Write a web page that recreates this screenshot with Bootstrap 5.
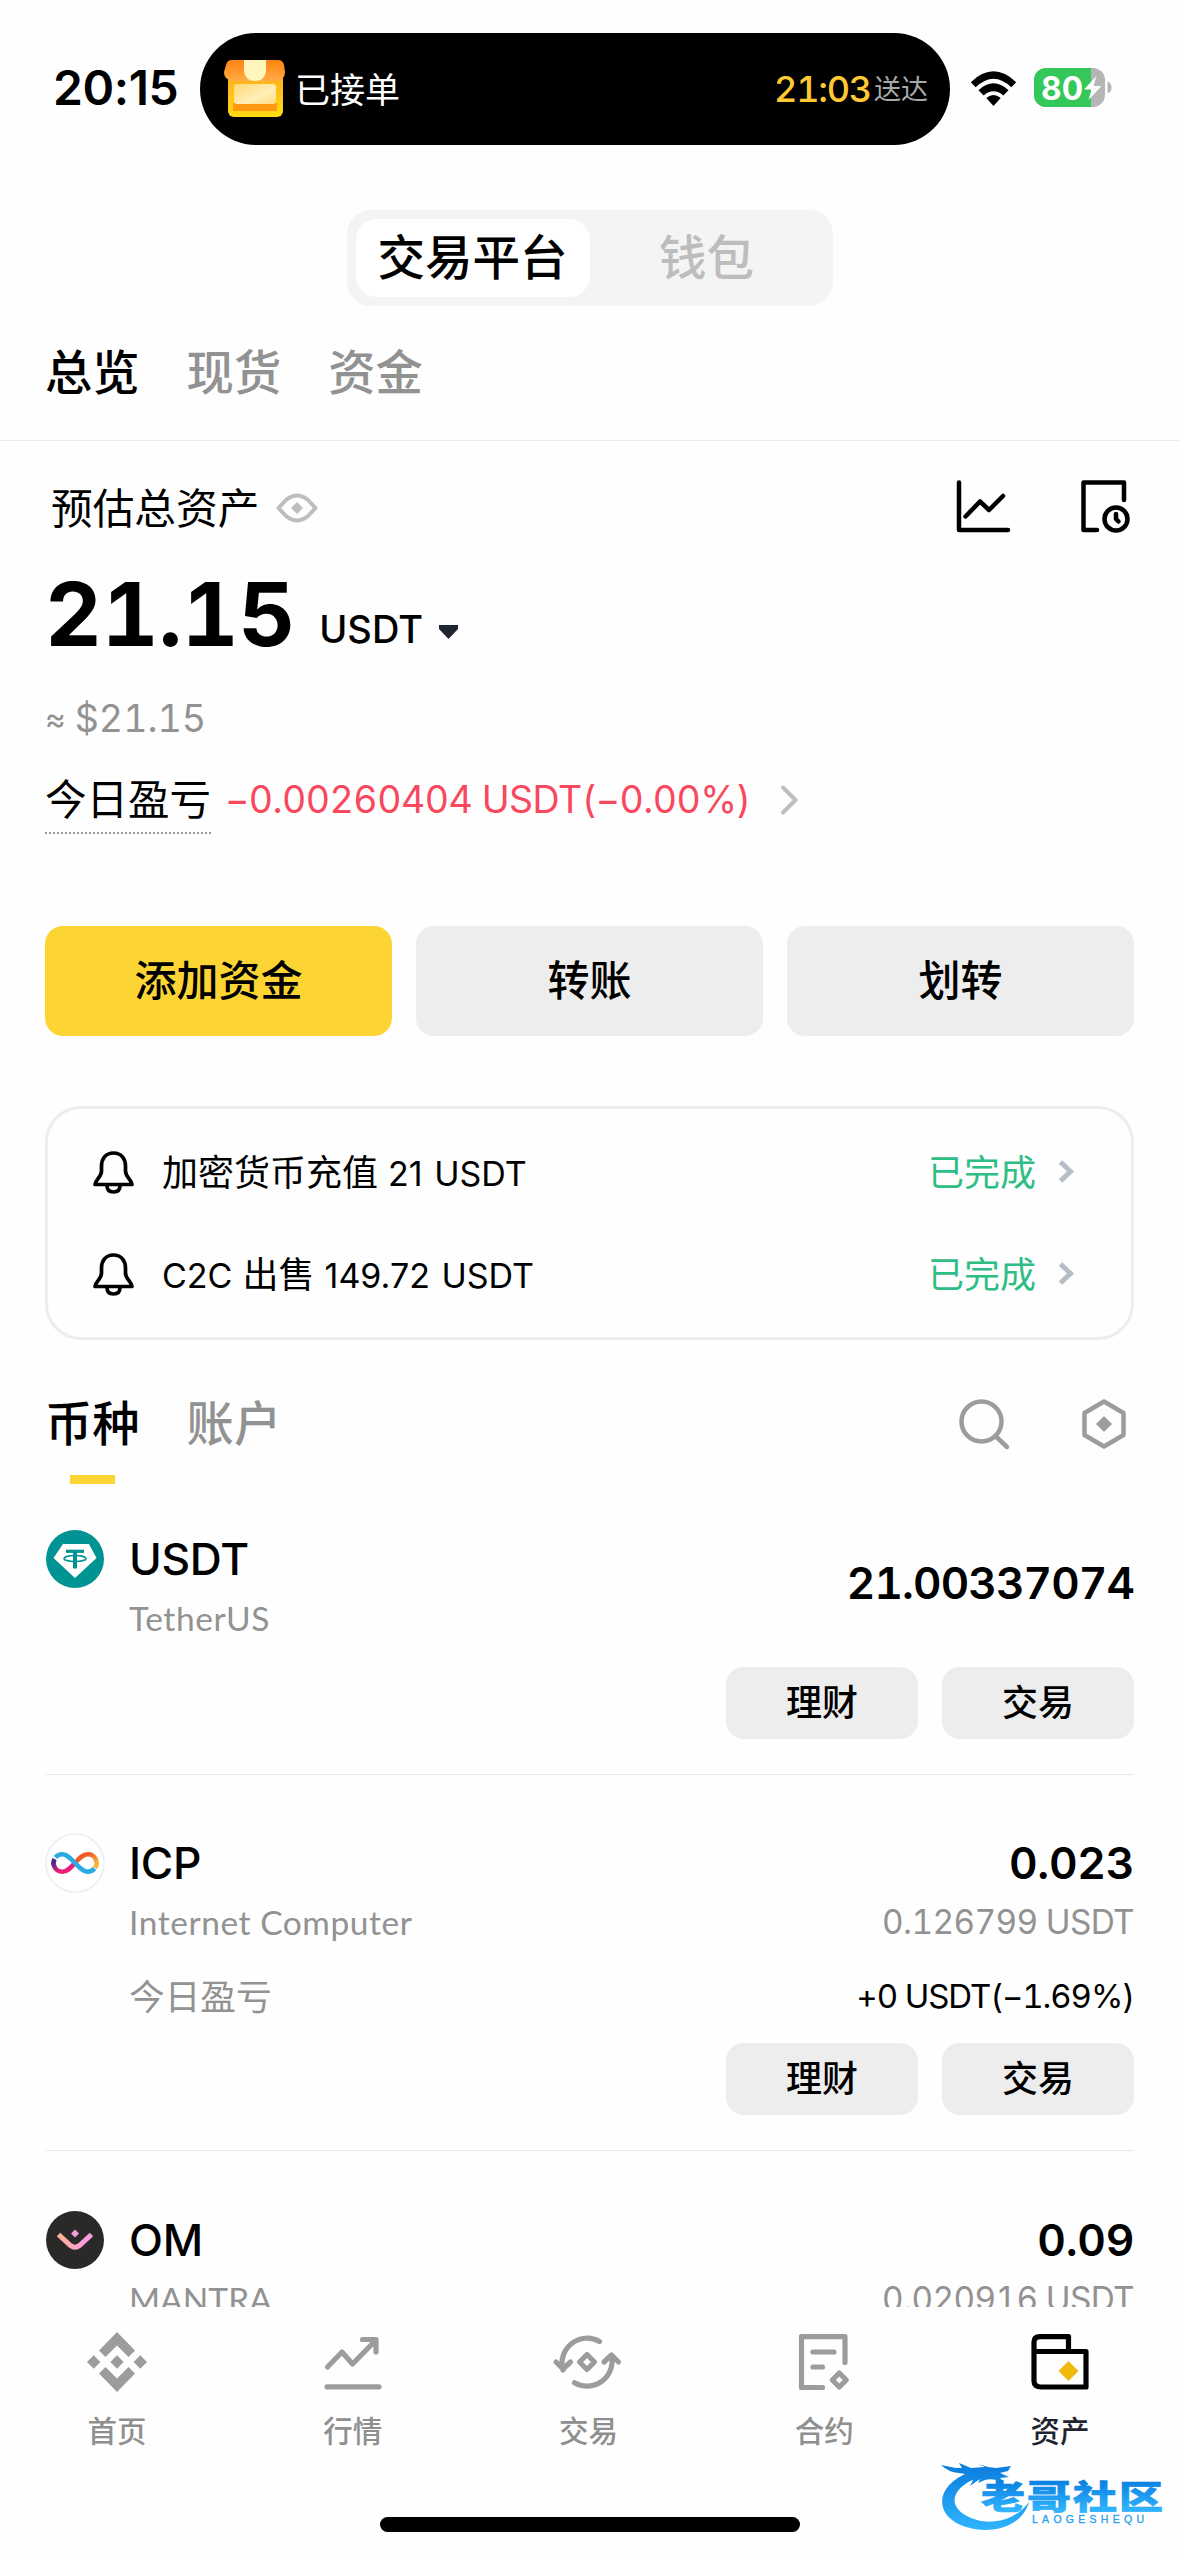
<!DOCTYPE html>
<html lang="zh-CN">
<head>
<meta charset="utf-8">
<meta name="viewport" content="width=device-width, initial-scale=1">
<title>资产</title>
<link href="https://cdn.jsdelivr.net/npm/bootstrap@5.3.0/dist/css/bootstrap.min.css" rel="stylesheet">
<style>
  html, body { width: 1179px; height: 2556px; margin: 0; overflow: hidden; }
  body { background: #fefefe; color: #000; font-family: "Noto Sans CJK SC", sans-serif; font-size: 36px; line-height: 1; }
  svg { display: block; flex: none; overflow: visible; }
  .ltn { font-family: Inter, "Noto Sans CJK SC", sans-serif; }
  .tnum { font-variant-numeric: tabular-nums; }
  .nametext { font-family: Lato, "Open Sans", sans-serif; letter-spacing: .55px; }
  .muted { color: #929292; }
  .px-page { padding-left: 45px; padding-right: 45px; }

  .statusbar { height: 112px; margin-top: 33px; }
  .clock { width: 200px; padding-left: 53px; font-size: 48px; font-weight: 600; letter-spacing: -.4px; padding-bottom: 2px; }
  .island { width: 750px; height: 112px; border-radius: 56px; background: #000; padding: 0 22px 0 24px; }
  .island-title { font-size: 35px; color: #fff; margin-left: 9px; padding-bottom: 4px; }
  .island-time { font-size: 36px; color: #ffc933; font-weight: 500; letter-spacing: -1.2px; }
  .island-note { font-size: 27px; color: #a8a8a8; margin-left: 3px; padding-bottom: 3px; }
  .segment { width: 486px; height: 96px; margin: 65px auto 0; padding: 9px; border-radius: 24px; background: #f4f4f4; font-size: 47.5px; }
  .segment > div { width: 234px; height: 78px; border-radius: 21px; padding-bottom: 7px; }
  .segment .active { background: #fff; font-weight: 500; }
  .segment .idle { color: #bdbdbd; font-weight: 500; }
  .toptabs { height: 134px; gap: 47px; font-size: 47.3px; border-bottom: 1px solid #eaeaea; box-sizing: border-box; height: 135px; padding-bottom: 6px; font-weight: 500; }

  .row-title { height: 133px; padding: 0 4px 0 6px; font-size: 41.7px; }
  .row-title span { padding-bottom: 1px; }
  .row-total { height: 81px; }
  .total { font-size: 88px; font-weight: 700; line-height: 81px; letter-spacing: -.2px; }
  .unit { font-size: 38px; font-weight: 500; margin-left: 24px; transform: translateY(-3px); }
  .row-approx { height: 54px; margin-top: 37px; font-size: 37.5px; }
  .row-pnl { height: 108px; }
  .pnl-label { font-size: 41.5px; height: 67px; line-height: 60px; border-bottom: 2px dotted #999; margin-top: 1px; }
  .pnl-value { font-size: 37.5px; color: #f8485e; margin-left: 14px; letter-spacing: -.55px; }

  .actions { gap: 24px; margin-top: 72px; }
  .actions .btn { height: 110px; border-radius: 18px; font-size: 42px; font-weight: 500; border: 0; background: #ededed; color: #000; line-height: 1; padding: 0 0 7px; }
  .actions .btn.main { background: #fcd535; }
  .notice { margin-top: 70px; height: 234px; border: 3px solid #ededed; border-radius: 36px; padding: 12px 56px 12px 45px; }
  .notice-row { height: 102px; }
  .notice-text { font-size: 36px; margin-left: 28px; padding-bottom: 2px; word-spacing: 2px; }
  .notice-text .ltn { font-size: 34px; }
  .done { color: #2ebd85; margin-right: 22px; padding-bottom: 4px; }

  .asset-tabs { margin-top: 60px; height: 84px; gap: 47px; font-size: 47.3px; }
  .asset-tabs .tab { line-height: 42px; font-weight: 500; }
  .tab-bar { width: 45px; height: 9px; margin-top: 33px; background: #fcd535; }
  .asset { border-bottom: 1px solid #e9e9e9; padding: 59px 0 35px; }
  .asset.first { padding-top: 46px; }
  .asset.last { padding-top: 60px; }
  .coin { width: 60px; margin-right: 24px; }
  .l1 { height: 58px; font-size: 44.3px; font-weight: 600; letter-spacing: -.3px; }
  .l1.sym { font-weight: 500; padding-top: 1px; }
  .l2 { height: 62px; font-size: 33.5px; color: #929292; }
  .l2.val { letter-spacing: -.6px; font-size: 33.3px; }
  .l3 { height: 84px; font-size: 35.7px; padding-bottom: 3px; }
  .l3.val { letter-spacing: -1.1px; font-size: 33px; padding-bottom: 0; }
  .amount-solo { height: 106px; font-size: 44px; font-weight: 600; letter-spacing: -.85px; }
  .pills { gap: 24px; }
  .pills .btn { width: 192px; height: 72px; border-radius: 18px; border: 0; background: #ededed; color: #000; font-size: 36px; font-weight: 500; line-height: 1; padding: 0 0 6px; }

  .bottombar { height: 249px; background: #fefefe; }
  .bottombar .item { width: 20%; padding-top: 20px; padding-right: 2px; }
  .bottombar .item span { font-size: 29.5px; margin-top: 15px; color: #8f8f8f; font-weight: 500; line-height: 34px; }
  .bottombar .item.current span { color: #1e2530; }
  .homebar { left: 380px; top: 210px; width: 420px; height: 15px; border-radius: 8px; background: #000; }
  .stamp { left: 938px; top: 148px; }
</style>
</head>
<body class="d-flex flex-column">

<main class="flex-grow-1 overflow-hidden" style="min-height:0">
  <header>
    <div class="statusbar d-flex align-items-center">
      <div class="clock ltn">20:15</div>
      <div class="island d-flex align-items-center justify-content-between">
        <div class="d-flex align-items-center">
          <svg width="62" height="58" viewBox="0 0 62 58">
            <defs>
              <linearGradient id="box" x1="0" y1="0" x2="0" y2="1"><stop offset="0" stop-color="#ffa51e"/><stop offset="1" stop-color="#ffdc14"/></linearGradient>
              <linearGradient id="roof" x1="0" y1="0" x2="0" y2="1"><stop offset="0" stop-color="#ff8410"/><stop offset="1" stop-color="#ffab45"/></linearGradient>
              <linearGradient id="pane" x1="0" y1="0" x2="1" y2="1"><stop offset="0" stop-color="#ffd873"/><stop offset=".6" stop-color="#ffefb8"/><stop offset="1" stop-color="#ffdb83"/></linearGradient>
            </defs>
            <rect x="4" y="8" width="55" height="49" rx="6" fill="url(#box)"/>
            <path d="M8 0h46q5 0 6 5l1 7q0 9-11 9H12Q0 21 0 12l2-7q1-5 6-5z" fill="url(#roof)"/>
            <rect x="9" y="43" width="44" height="8" fill="#ff9812"/>
            <rect x="10" y="24" width="42" height="20" rx="3" fill="url(#pane)"/>
            <path d="M20 0h22v12q-2 9-11 9T20 12z" fill="#fff6bd"/>
          </svg>
          <div class="island-title">已接单</div>
        </div>
        <div class="d-flex align-items-center">
          <span class="island-time ltn tnum">21:03</span><span class="island-note">送达</span>
        </div>
      </div>
      <svg class="ms-auto" width="47" height="36" viewBox="0 0 47 36">
        <path d="M0.8 11.2Q23.5-10.500 46.200 11.200L41.300 16.300Q23.500-.8 5.700 16.300z"/>
        <path d="M8.500 19.200Q23.500 5.500 38.500 19.200L33.300 24.400Q23.500 16 13.700 24.400z"/>
        <path d="M16.300 27Q23.500 21 30.700 27L23.500 35z"/>
      </svg>
      <svg style="margin:0 67px 3px 17px" width="78" height="39" viewBox="0 0 78 39">
        <defs><clipPath id="cell"><rect width="71" height="39" rx="12"/></clipPath></defs>
        <g clip-path="url(#cell)"><rect width="71" height="39" fill="#b5b5b5"/><rect width="57" height="39" fill="#34c759"/></g>
        <path d="M73.500 13.500q4 1.500 4 6t-4 6z" fill="#b5b5b5"/>
        <text x="7" y="31.500" font-family="Inter, sans-serif" font-size="32" font-weight="700" fill="#fff" textLength="42" lengthAdjust="spacingAndGlyphs">80</text>
        <path d="M62.500 8L50 21.500h7.500L54.500 32 67.500 18h-8z" fill="#fff"/>
      </svg>
    </div>

    <div class="segment d-flex">
      <div class="active d-flex align-items-center justify-content-center">交易平台</div>
      <div class="idle d-flex align-items-center justify-content-center">钱包</div>
    </div>

    <div class="toptabs px-page d-flex align-items-center">
      <div>总览</div><div class="muted">现货</div><div class="muted">资金</div>
    </div>
  </header>

  <section class="px-page">
    <div class="row-title d-flex align-items-center">
      <span>预估总资产</span>
      <svg style="margin-left:17px" width="42" height="30" viewBox="0 0 42 30" fill="none" stroke="#bdbdbd" stroke-width="4">
        <path d="M2.500 15L10 7Q21-2 32 7L39.500 15 32 23Q21 32 10 23z" stroke-linejoin="round"/>
        <path d="M21 9l6 6-6 6-6-6z" fill="#bdbdbd" stroke="none"/>
      </svg>
      <svg class="ms-auto" style="margin-bottom:3px" width="54" height="53" viewBox="0 0 54 53" fill="none" stroke="#000" stroke-width="4.500" stroke-linecap="round" stroke-linejoin="round">
        <path d="M3 2.500v47.500h49M9.500 36.500L24 21.500l9 8.500L47 16"/>
      </svg>
      <svg style="margin:0 0 3px 71px" width="49" height="53" viewBox="0 0 49 53" fill="none" stroke="#000" stroke-width="4.500" stroke-linecap="round" stroke-linejoin="round">
        <path d="M43 20V2.500H2.500V50H16"/><circle cx="35" cy="39" r="11.500"/><path d="M35 34v5l2.500 2.500"/>
      </svg>
    </div>

    <div class="row-total ltn d-flex align-items-baseline">
      <span class="total tnum">21.15</span>
      <span class="unit">USDT</span>
      <svg style="margin-left:16px" width="19" height="14" viewBox="0 0 19 14"><path d="M0 0h19v4L9.500 14 0 4z" fill="#1e2530" transform="translate(0,-7)"/></svg>
    </div>

    <div class="row-approx ltn tnum muted d-flex align-items-center">
      <span style="font-size:32px;margin-right:9px">≈</span><span>$21.15</span>
    </div>

    <div class="row-pnl d-flex align-items-center">
      <span class="pnl-label">今日盈亏</span>
      <span class="pnl-value ltn tnum">−0.00260404 USDT(−0.00%)</span>
      <svg style="margin-left:30px" width="17" height="30" viewBox="0 0 17 30" fill="none" stroke="#bfbfbf" stroke-width="4" stroke-linecap="round" stroke-linejoin="round"><path d="M2 2.500L14.500 15 2 27.500"/></svg>
    </div>

    <div class="actions d-flex">
      <button class="btn main flex-fill w-100">添加资金</button>
      <button class="btn flex-fill w-100">转账</button>
      <button class="btn flex-fill w-100">划转</button>
    </div>

    <div class="notice">
      <div class="notice-row d-flex align-items-center">
        <svg width="41" height="43" viewBox="0 0 41 43" fill="none" stroke="#000" stroke-width="3.700" stroke-linejoin="round"><path d="M20.500 2C12.500 2 8.500 8 8.500 15V20C8.500 26 3 28 2 33.500H39C38 28 32.500 26 32.500 20V15C32.500 8 28.500 2 20.500 2z"/><path d="M14 34.500q0 6.500 6.500 6.500t6.500-6.500"/></svg>
        <div class="notice-text">加密货币充值 <span class="ltn">21 USDT</span></div>
        <div class="done ms-auto">已完成</div>
        <svg style="margin-bottom:2px" width="17" height="23" viewBox="0 0 17 23" fill="none" stroke="#b7bdc6" stroke-width="5"><path d="M2.500 2L12.500 11.500 2.500 21"/></svg>
      </div>
      <div class="notice-row d-flex align-items-center">
        <svg width="41" height="43" viewBox="0 0 41 43" fill="none" stroke="#000" stroke-width="3.700" stroke-linejoin="round"><path d="M20.500 2C12.500 2 8.500 8 8.500 15V20C8.500 26 3 28 2 33.500H39C38 28 32.500 26 32.500 20V15C32.500 8 28.500 2 20.500 2z"/><path d="M14 34.500q0 6.500 6.500 6.500t6.500-6.500"/></svg>
        <div class="notice-text"><span class="ltn">C2C</span> 出售 <span class="ltn">149.72 USDT</span></div>
        <div class="done ms-auto">已完成</div>
        <svg style="margin-bottom:2px" width="17" height="23" viewBox="0 0 17 23" fill="none" stroke="#b7bdc6" stroke-width="5"><path d="M2.500 2L12.500 11.500 2.500 21"/></svg>
      </div>
    </div>

    <div class="asset-tabs d-flex">
      <div class="tab d-flex flex-column align-items-center"><span>币种</span><div class="tab-bar"></div></div>
      <div class="tab muted">账户</div>
      <svg class="ms-auto" style="margin-top:-1px" width="51" height="50" viewBox="0 0 51 50" fill="none" stroke="#9c9c9c" stroke-width="4.500" stroke-linecap="round"><circle cx="22.500" cy="22.500" r="20"/><path d="M37 37.500L48 48"/></svg>
      <svg style="margin:-1px 8px 0 25px" width="44" height="50" viewBox="0 0 44 50" fill="none" stroke="#9c9c9c" stroke-width="4.500" stroke-linejoin="round"><path d="M22 2.500L41.500 14v22L22 47.500 2.500 36V14z"/><path d="M22 17l8 8-8 8-8-8z" fill="#9c9c9c" stroke="none"/></svg>
    </div>

    <div class="asset first">
      <div class="d-flex">
        <svg class="coin" height="58" viewBox="0 0 60 58"><circle cx="30" cy="29" r="29" fill="#009393"/><path d="M18 14h26l7.500 14L30 48 8.500 28z" fill="#fff"/><g fill="none" stroke="#009393"><path d="M21 21.300h18" stroke-width="3.200"/><path d="M30 21v17.500" stroke-width="4"/><ellipse cx="30" cy="28.500" rx="11" ry="3" stroke-width="1.600"/></g></svg>
        <div>
          <div class="l1 sym ltn d-flex align-items-center">USDT</div>
          <div class="l2 nametext d-flex align-items-center">TetherUS</div>
        </div>
        <div class="amount-solo ltn tnum ms-auto d-flex align-items-center">21.00337074</div>
      </div>
      <div class="pills d-flex justify-content-end" style="margin-top:17px"><button class="btn">理财</button><button class="btn">交易</button></div>
    </div>

    <div class="asset">
      <div class="d-flex">
        <svg class="coin" height="58" viewBox="0 0 60 58" fill="none">
          <defs>
            <linearGradient id="icl" x1="0" y1="0" x2="1" y2="1"><stop offset=".15" stop-color="#522785"/><stop offset=".6" stop-color="#ed1e79"/></linearGradient>
            <linearGradient id="icr" x1="0" y1="0" x2="1" y2="1"><stop offset=".3" stop-color="#f15a24"/><stop offset=".8" stop-color="#fbb03b"/></linearGradient>
          </defs>
          <circle cx="30" cy="29" r="29" fill="#fff" stroke="#ededed" stroke-width="1.500"/>
          <path d="M30 29C25 34.500 22 37.700 17.500 37.700A8.700 8.700 0 0 1 9.500 25" stroke="url(#icl)" stroke-width="4.600"/>
          <path d="M30 29C35 23.500 38 20.300 42.500 20.300A8.700 8.700 0 0 1 50 34" stroke="url(#icr)" stroke-width="4.600"/>
          <path d="M10.500 23.500Q13 20.300 17.500 20.300C26 20.300 34 37.700 42.500 37.700Q47 37.700 49.500 34.500" stroke="#29abe2" stroke-width="4.600"/>
        </svg>
        <div>
          <div class="l1 sym ltn d-flex align-items-center">ICP</div>
          <div class="l2 nametext d-flex align-items-center">Internet Computer</div>
          <div class="l3 muted d-flex align-items-center">今日盈亏</div>
        </div>
        <div class="ms-auto ltn tnum">
          <div class="l1 d-flex align-items-center justify-content-end">0.023</div>
          <div class="l2 val d-flex align-items-center justify-content-end">0.126799 USDT</div>
          <div class="l3 val d-flex align-items-center justify-content-end">+0 USDT(−1.69%)</div>
        </div>
      </div>
      <div class="pills d-flex justify-content-end" style="margin-top:5px"><button class="btn">理财</button><button class="btn">交易</button></div>
    </div>

    <div class="asset last">
      <div class="d-flex">
        <svg class="coin" height="58" viewBox="0 0 60 58"><defs><linearGradient id="om"><stop offset="0" stop-color="#ffb493"/><stop offset=".8" stop-color="#fa9be0"/></linearGradient></defs><circle cx="30" cy="29" r="29" fill="#2a2928"/><path d="M13.500 23.500L25.500 34.500q4.500 3.500 9 0L46.500 23.500" fill="none" stroke="url(#om)" stroke-width="5"/><path d="M30 18.500l4 4-4 4-4-4z" fill="#fa9be0"/></svg>
        <div>
          <div class="l1 sym ltn d-flex align-items-center">OM</div>
          <div class="l2 nametext d-flex align-items-center" style="letter-spacing:0">MANTRA</div>
        </div>
        <div class="ms-auto ltn tnum">
          <div class="l1 d-flex align-items-center justify-content-end">0.09</div>
          <div class="l2 val d-flex align-items-center justify-content-end">0.020916 USDT</div>
        </div>
      </div>
    </div>
  </section>
</main>

<nav class="bottombar flex-shrink-0 position-relative">
  <div class="d-flex">
    <div class="item d-flex flex-column align-items-center">
      <svg width="70" height="70" viewBox="0 0 70 70" fill="#9c9c9c"><path d="M35 5L53 23.500l-6.500 6.500L35 18.500 23.500 30 17 23.500zM35 65L53 46.500 46.500 40 35 51.500 23.500 40 17 46.500zM35 28.300l6.700 6.700-6.700 6.700-6.700-6.700zM11.700 28.300l6.700 6.700-6.700 6.700L5 35zM58.300 28.300L65 35l-6.700 6.700-6.700-6.700z"/></svg>
      <span>首页</span>
    </div>
    <div class="item d-flex flex-column align-items-center">
      <svg width="70" height="70" viewBox="0 0 70 70" fill="none" stroke="#9c9c9c" stroke-width="5.200" stroke-linecap="round" stroke-linejoin="round"><path d="M9.500 40L24 25l10.500 12L58 13M44.500 12.500H58V25M9 59.800h52"/></svg>
      <span>行情</span>
    </div>
    <div class="item d-flex flex-column align-items-center">
      <svg width="70" height="70" viewBox="0 0 70 70" fill="none" stroke="#9c9c9c" stroke-width="5.200" stroke-linecap="round" stroke-linejoin="round"><path d="M46.500 14.500A25 25 0 0 0 10 43M3 35l7 7 7.500-7M21.500 55.800A25 25 0 0 0 58.500 29M51 35l7.500-7 7 7"/><path d="M34 27.500l7.500 7.500-7.500 7.500-7.500-7.500z"/></svg>
      <span>交易</span>
    </div>
    <div class="item d-flex flex-column align-items-center">
      <svg width="70" height="70" viewBox="0 0 70 70" fill="none" stroke="#9c9c9c" stroke-width="5.200" stroke-linecap="round" stroke-linejoin="round"><path d="M56 35.500V9.700H12.500v50.800h21M24 25h21M24 40h9.500"/><path d="M50.300 46l7 7-7 7-7-7z"/></svg>
      <span>合约</span>
    </div>
    <div class="item current d-flex flex-column align-items-center">
      <svg width="70" height="70" viewBox="0 0 70 70" fill="none" stroke="#000" stroke-width="5.200" stroke-linejoin="round"><path d="M9 24.500V15q0-5.300 6-5.300h28.500v14.800M9 24.500H61v35.500H16q-7 0-7-6z"/><path d="M43.500 34L53.500 44l-10 10-10-10z" fill="#f0b90b" stroke="none"/></svg>
      <span>资产</span>
    </div>
  </div>
  <div class="homebar position-absolute"></div>
  <svg class="stamp position-absolute" width="228" height="80" viewBox="0 0 228 80">
    <defs><linearGradient id="wave" gradientUnits="userSpaceOnUse" x1="0" y1="8" x2="0" y2="76"><stop offset="0" stop-color="#0a7bdc"/><stop offset="1" stop-color="#2fb6ff"/></linearGradient>
    <linearGradient id="ink" x1="0" y1="0" x2="0" y2="1"><stop offset=".2" stop-color="#0a7fe2"/><stop offset=".9" stop-color="#35b8ff"/></linearGradient></defs>
    <path d="M32 17C-4 30-5 62 28 72C54 80 84 72 91 47C79 64 56 70 39 65C9 56 8 35 42 21z" fill="url(#wave)"/>
    <path d="M3 10L18 13L24 13L21 8L33 13L47 12L40 9Q48 12 58 13L73 11L70 16L62 18L71 22L62 23L66 27Q54 23 47 25L40 28L42 24L32 31L35 25L29 27L33 20L21 18Q10 17 3 10z" fill="url(#wave)"/>
    <text transform="translate(43 54) scale(1 .74)" font-family="'Noto Sans CJK SC', sans-serif" font-weight="900" font-size="44" fill="url(#ink)" stroke="url(#ink)" stroke-width="1" textLength="182" lengthAdjust="spacing">老哥社区</text>
    <text x="94" y="68" font-family="'Liberation Sans', sans-serif" font-size="10.500" fill="#279eee" stroke="#279eee" stroke-width=".3" textLength="112" lengthAdjust="spacing">LAOGESHEQU</text>
  </svg>
</nav>

<script src="https://cdn.jsdelivr.net/npm/bootstrap@5.3.0/dist/js/bootstrap.bundle.min.js"></script>
</body>
</html>
